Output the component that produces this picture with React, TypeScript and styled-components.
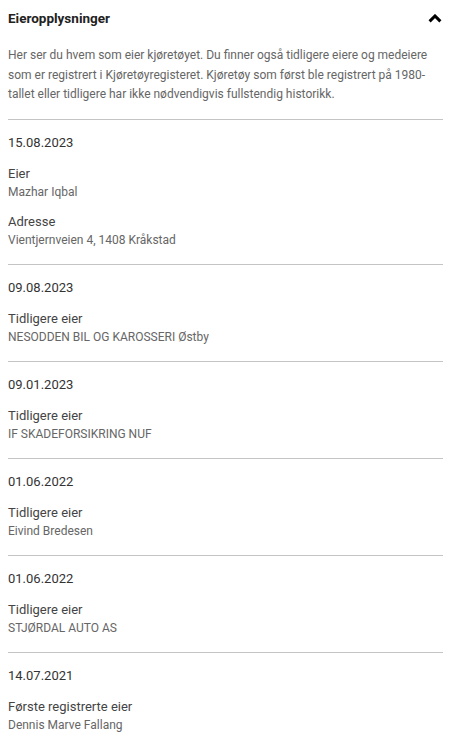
import React from 'react'
import styled, { createGlobalStyle } from 'styled-components'

const GlobalStyle = createGlobalStyle`
  body {
    margin: 0;
    background: #fff;
    font-family: Roboto, "Noto Sans", sans-serif;
  }
`

const Panel = styled.section`
  padding: 9px 15px 0 8px;
`

const Header = styled.div`
  display: flex;
  align-items: center;
  justify-content: space-between;
  height: 19px;
`

const Title = styled.h2`
  margin: 0;
  font-size: 13.5px;
  line-height: 19px;
  font-weight: 700;
  color: #222;
`

const Toggle = styled.button`
  border: 0;
  background: none;
  padding: 0;
  margin-right: 1px;
  display: flex;
  cursor: pointer;
`

const Intro = styled.p`
  margin: 18px 0 0;
  padding-bottom: 14px;
  font-size: 12px;
  line-height: 19.5px;
  color: #666;
  border-bottom: 1px solid #c4c4c4;
`

const Entry = styled.div<{ $last?: boolean }>`
  padding: 13px 0 14px;
  border-bottom: ${({ $last }) => ($last ? 'none' : '1px solid #c4c4c4')};
`

const EntryDate = styled.div`
  font-size: 13px;
  line-height: 19px;
  color: #333;
  margin-bottom: 12px;
`

const Field = styled.div`
  & + & {
    margin-top: 10px;
  }
`

const Label = styled.div`
  font-size: 13px;
  line-height: 19px;
  color: #444;
`

const Value = styled.div`
  font-size: 12px;
  line-height: 19px;
  color: #666;
`

type Owner = { date: string; fields: [string, string][] }

const owners: Owner[] = [
  {
    date: '15.08.2023',
    fields: [
      ['Eier', 'Mazhar Iqbal'],
      ['Adresse', 'Vientjernveien 4, 1408 Kråkstad'],
    ],
  },
  { date: '09.08.2023', fields: [['Tidligere eier', 'NESODDEN BIL OG KAROSSERI Østby']] },
  { date: '09.01.2023', fields: [['Tidligere eier', 'IF SKADEFORSIKRING NUF']] },
  { date: '01.06.2022', fields: [['Tidligere eier', 'Eivind Bredesen']] },
  { date: '01.06.2022', fields: [['Tidligere eier', 'STJØRDAL AUTO AS']] },
  { date: '14.07.2021', fields: [['Første registrerte eier', 'Dennis Marve Fallang']] },
]

const App = () => {
  return (
    <>
      <GlobalStyle />
      <Panel>
        <Header>
          <Title>Eieropplysninger</Title>
          <Toggle aria-label="Skjul">
            <svg width="14" height="9" viewBox="0 0 14 9">
              <polyline points="1.6,7.4 7,2 12.4,7.4" fill="none" stroke="#000" strokeWidth="3" />
            </svg>
          </Toggle>
        </Header>
        <Intro>
          Her ser du hvem som eier kjøretøyet. Du finner også tidligere eiere og medeiere som er
          registrert i Kjøretøyregisteret. Kjøretøy som først ble registrert på 1980-tallet eller
          tidligere har ikke nødvendigvis fullstendig historikk.
        </Intro>
        {owners.map((o, i) => (
          <Entry key={i} $last={i === owners.length - 1}>
            <EntryDate>{o.date}</EntryDate>
            {o.fields.map(([label, value]) => (
              <Field key={label}>
                <Label>{label}</Label>
                <Value>{value}</Value>
              </Field>
            ))}
          </Entry>
        ))}
      </Panel>
    </>
  )
}

export default App
